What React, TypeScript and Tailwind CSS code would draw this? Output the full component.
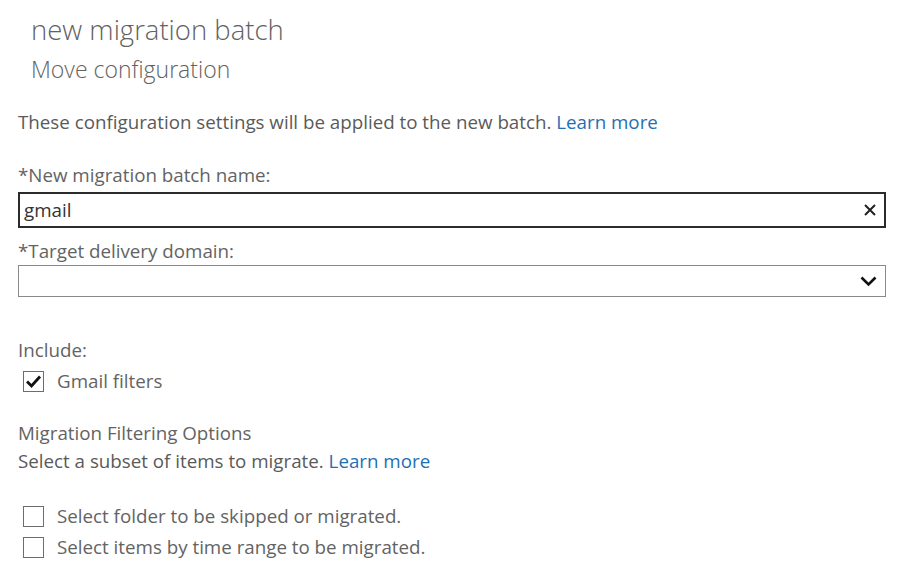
import { useState } from "react";

const font = { fontFamily: '"Open Sans", "Noto Sans", sans-serif' };

const CheckBox = ({ checked, label, onToggle }: { checked: boolean; label: string; onToggle: () => void }) => (
  <label className="flex items-center cursor-pointer" onClick={onToggle}>
    <span className="ml-[5px] w-[21px] h-[21px] border border-[#6d6d6d] bg-white flex items-center justify-center">
      {checked && (
        <svg width="17" height="15" viewBox="0 0 17 15">
          <path d="M2 7.5 L6.5 12 L15 2.5" fill="none" stroke="#111" strokeWidth="2.8" />
        </svg>
      )}
    </span>
    <span className="ml-[13px] text-[18.75px] text-[#636363]">{label}</span>
  </label>
);

const App = () => {
  const [name, setName] = useState("gmail");
  const [gmailFilters, setGmailFilters] = useState(true);
  const [folders, setFolders] = useState(false);
  const [timeRange, setTimeRange] = useState(false);

  return (
    <div className="w-[912px] h-[577px] bg-white overflow-hidden" style={font}>
      <div className="pl-[31px] pt-[12px]">
        <div className="text-[27.5px] leading-[36px] text-[#626262] font-light">new migration batch</div>
        <div className="text-[23px] leading-[30px] mt-[6px] text-[#626262] font-light">Move configuration</div>
      </div>

      <div className="pl-[18px] pr-[26px]">
        <p className="mt-[25px] text-[18.75px] leading-[26px] text-[#5a5a5a]">
          These configuration settings will be applied to the new batch.{" "}
          <a href="#" className="text-[#1e6fb5]">Learn more</a>
        </p>

        <div className="mt-[27px] text-[18.75px] leading-[26px] text-[#636363]">*New migration batch name:</div>
        <div className="mt-[4px] h-[36px] border-2 border-[#2b2b2b] flex items-center">
          <input
            value={name}
            onChange={(e) => setName(e.target.value)}
            className="flex-1 outline-none pl-[4px] text-[18.75px] text-[#333] bg-transparent"
          />
          <button className="w-[28px] h-full flex items-center justify-center" onClick={() => setName("")}>
            <svg width="12" height="12" viewBox="0 0 12 12">
              <path d="M1 1 L11 11 M11 1 L1 11" stroke="#222" strokeWidth="2" />
            </svg>
          </button>
        </div>

        <div className="mt-[10px] text-[18.75px] leading-[26px] text-[#636363]">*Target delivery domain:</div>
        <div className="mt-[1px] h-[32px] border border-[#8a8a8a] flex items-center justify-end pr-[8px]">
          <svg width="17" height="11" viewBox="0 0 17 11">
            <path d="M1.5 1.5 L8.5 8.5 L15.5 1.5" fill="none" stroke="#111" strokeWidth="2.6" />
          </svg>
        </div>

        <div className="mt-[40px] text-[18.75px] leading-[26px] text-[#636363]">Include:</div>
        <div className="mt-[4px]">
          <CheckBox checked={gmailFilters} label="Gmail filters" onToggle={() => setGmailFilters(!gmailFilters)} />
        </div>

        <div className="mt-[25px] text-[18.75px] leading-[26px] text-[#636363]">Migration Filtering Options</div>
        <p className="mt-[2px] text-[18.75px] leading-[26px] text-[#5a5a5a]">
          Select a subset of items to migrate.{" "}
          <a href="#" className="text-[#1e6fb5]">Learn more</a>
        </p>

        <div className="mt-[28px] flex flex-col gap-[3px]">
          <CheckBox checked={folders} label="Select folder to be skipped or migrated." onToggle={() => setFolders(!folders)} />
          <CheckBox checked={timeRange} label="Select items by time range to be migrated." onToggle={() => setTimeRange(!timeRange)} />
        </div>
      </div>
    </div>
  );
};

export default App;
